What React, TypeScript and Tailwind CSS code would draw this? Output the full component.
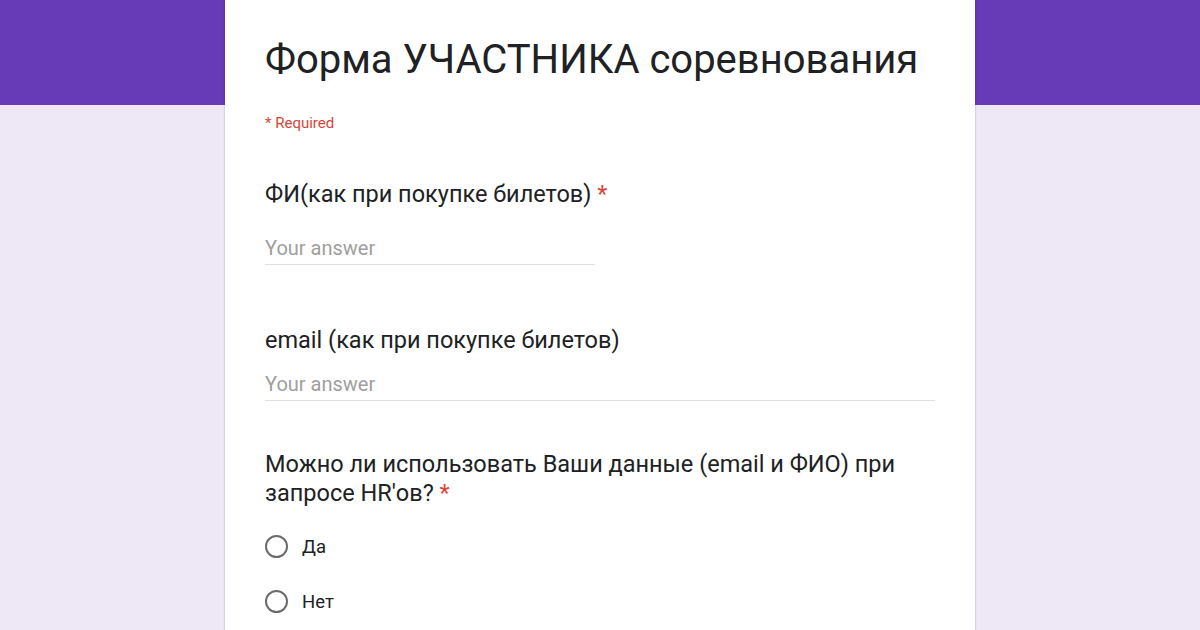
import React from 'react';

const Radio: React.FC<{ label: string }> = ({ label }) => (
  <label className="flex items-center h-[55px] cursor-pointer">
    <span className="w-[23px] h-[23px] rounded-full border-2 border-[#6b6b6b] shrink-0" />
    <span className="ml-[14px] text-[18.5px] leading-[24px] text-[#202124]">{label}</span>
  </label>
);

const TextAnswer: React.FC<{ width: string }> = ({ width }) => (
  <div className={`${width} border-b border-[#e0e0e0] pb-[4px]`}>
    <div className="text-[20px] leading-[24px] text-[#9e9e9e]">Your answer</div>
  </div>
);

export default function App() {
  return (
    <div className="w-[1200px] h-[630px] overflow-hidden bg-[#ede7f6] relative" style={{ fontFamily: 'Roboto, "Noto Sans", sans-serif' }}>
      <div className="h-[105px] bg-[#673ab7]" />
      <div className="absolute inset-0 flex justify-center">
        <div className="w-[750px] h-[700px] bg-white shadow-[0_0_2px_rgba(0,0,0,0.25)] px-[40px] pt-[36px]">
          <h1 className="text-[40px] leading-[48px] text-[#202124]">Форма УЧАСТНИКА соревнования</h1>
          <div className="mt-[29px] text-[15px] leading-[20px] text-[#db4437]">* Required</div>

          <div className="mt-[45px]">
            <div className="text-[23.5px] leading-[32px] text-[#202124]">
              ФИ(как при покупке билетов) <span className="text-[#db4437]">*</span>
            </div>
            <div className="mt-[26px]">
              <TextAnswer width="w-[330px]" />
            </div>
          </div>

          <div className="mt-[59px]">
            <div className="text-[23.5px] leading-[32px] text-[#202124]">email (как при покупке билетов)</div>
            <div className="mt-[16px]">
              <TextAnswer width="w-full" />
            </div>
          </div>

          <div className="mt-[49px]">
            <div className="text-[23.5px] leading-[29px] text-[#202124]">
              Можно ли использовать Ваши данные (email и ФИО) при
              <br />
              запросе HR'ов? <span className="text-[#db4437]">*</span>
            </div>
            <div className="mt-[11px]">
              <Radio label="Да" />
              <Radio label="Нет" />
            </div>
          </div>
        </div>
      </div>
    </div>
  );
}
